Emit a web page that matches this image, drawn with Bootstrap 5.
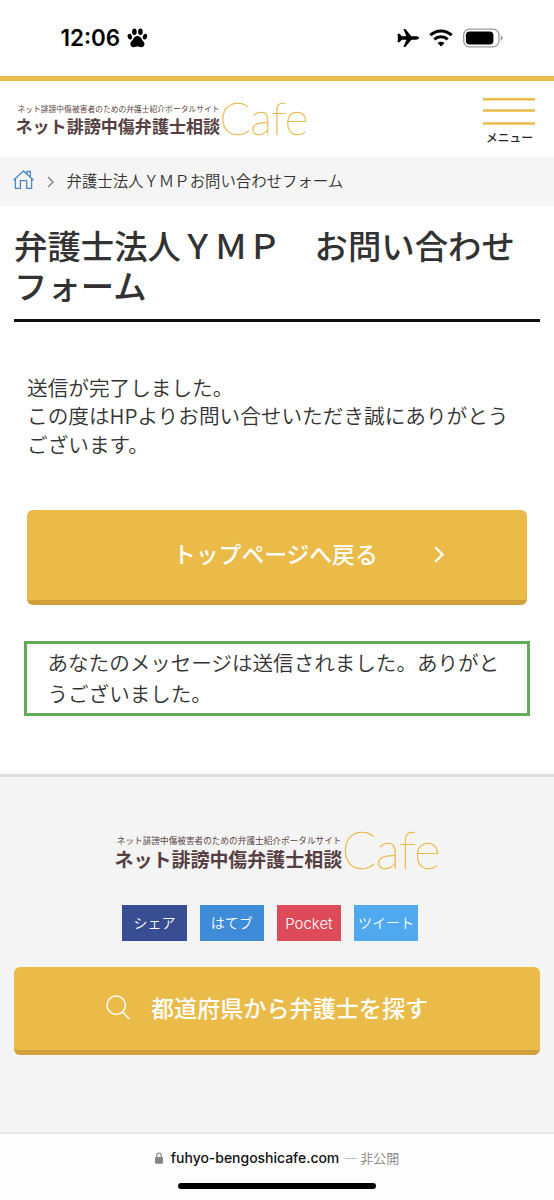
<!DOCTYPE html>
<html lang="ja">
<head>
<meta charset="utf-8">
<meta name="viewport" content="width=device-width, initial-scale=1">
<title>弁護士法人ＹＭＰ　お問い合わせフォーム</title>
<link rel="stylesheet" href="https://cdn.jsdelivr.net/npm/bootstrap@5.3.0/dist/css/bootstrap.min.css">
<style>
  :root { --gold: #eabb49; --gold-dark: #d29f3a; --ink: #323232; }
  body { font-family: "Noto Sans CJK JP", sans-serif; color: var(--ink); background: #fff; height: 1200px; font-weight: 350; overflow: hidden; }
  svg { display: block; flex: none; overflow: visible; }
  .status-bar { height: 76px; padding: 0 51px 0 60.5px; }
  .clock { font: 600 22.4px/26px Inter, sans-serif; color: #000; width: 62px; white-space: nowrap; }
  .site-header { height: 81px; border-top: 5px solid var(--gold); padding: 0 18px 0 15px; }
  .logo-tag { font-size: 7.77px; fill: #5b4545; font-weight: 400; }
  .logo-main { font-size: 17.05px; fill: #553f42; font-weight: 700; }
  .logo-cafe { font: 100 46px Lato, sans-serif; fill: #eabb49; stroke: #eabb49; stroke-width: .45px; }
  .menu-btn { width: 53px; padding: 17px 0 0; font-size: 11.7px; line-height: 17px; font-weight: 500; color: #222; }
  .crumbs { height: 49px; background: #f5f5f5; padding: 0 13px; font-size: 15.4px; line-height: 24px; }
  .page-title { font-size: 33.4px; line-height: 40px; font-weight: 500; margin: 19px 14px 0; height: 97px; border-bottom: 3px solid #111; color: var(--ink); }
  .done-text { margin: 51px 27px 0; font-size: 20.65px; line-height: 28.4px; height: 137px; white-space: nowrap; }
  .cta { background: var(--gold); border: 0; border-bottom: 5px solid var(--gold-dark); border-radius: 6px; color: #fff; font-weight: 500; display: flex; align-items: center; white-space: nowrap; text-decoration: none; }
  .cta-top { margin: 0 27px; height: 95px; font-size: 22.8px; padding: 0 0 1px 146px; }
  .cta-search { margin: 0 14px; height: 88px; font-size: 23.1px; padding: 0 0 2px 92px; }
  .sent { margin: 36px 24px 0; height: 75px; border: 3px solid #61ab5b; padding: 3px 20.5px; font-size: 20.55px; line-height: 30.6px; white-space: nowrap; }
  .site-footer { margin-top: 58px; height: 358px; border-top: 3px solid #dedede; background: #f4f4f4; }
  .shares { gap: 12.9px; margin: 32.5px 0 26px 122.4px; }
  .share { width: 64.3px; height: 36px; font-size: 14px; line-height: 35px; color: #fff; text-align: center; text-decoration: none; white-space: nowrap; }
  .fb { background: #384d92; } .hb { background: #3e8bd8; } .tw { background: #50a8ef; }
  .pk { background: #dd4b5b; font-family: Inter, sans-serif; font-size: 15px; font-weight: 300; line-height: 37px; }
  .browser-bar { height: 68px; background: #fdfdfd; border-top: 2px solid #e8e8e8; }
  .host { font: 500 14px/20px Inter, sans-serif; letter-spacing: -.03px; color: #111; }
  .private { font-size: 13px; line-height: 20px; color: #858585; }
  .home-bar { width: 198px; height: 6px; border-radius: 3px; background: #000; }
</style>
</head>
<body>
<div class="status-bar d-flex align-items-center">
  <div class="clock">12:06</div>
  <svg class="ms-1" width="21" height="20" viewBox="0 0 21 20"><ellipse cx="2.8" cy="8.7" rx="2.1" ry="2.9" transform="rotate(-18 2.8 8.7)"/><ellipse cx="7.4" cy="3.7" rx="2.3" ry="3.2"/><ellipse cx="13.4" cy="3.7" rx="2.3" ry="3.2"/><ellipse cx="18" cy="8.7" rx="2.1" ry="2.9" transform="rotate(18 18 8.7)"/><path d="M10.4 8c2.3 0 3.6 1.7 4.5 3.4.8 1.5 2.6 2.4 2.6 4.6 0 2-1.5 3.2-3.4 3.2-1.4 0-2.4-.6-3.7-.6s-2.3.6-3.7.6c-1.900 0-3.400-1.200-3.400-3.200 0-2.200 1.800-3.100 2.600-4.600C6.800 9.700 8.100 8 10.400 8z"/></svg>
  <div class="d-flex align-items-center ms-auto">
    <svg width="22" height="20" viewBox="0 0 22 20"><path d="M22 10c0 1.100-1.700 1.700-3.300 1.700h-4.200L8.300 19H6.400l3-7.300H4.900L2.400 14.300H.6L.9 10 .6 5.700h1.800l2.500 2.600h4.500L6.400 1h1.900l6.200 7.300h4.200c1.600 0 3.300.6 3.300 1.700z"/></svg>
    <svg style="margin-left:10px" width="24" height="18" viewBox="0 0 24 18"><path d="M1.300 6.200a15.400 15.400 0 0 1 21.400 0M5.300 10.400a9.700 9.700 0 0 1 13.400 0" fill="none" stroke="#000" stroke-width="3"/><path d="M12 17.600l-3.500-3.500a5 5 0 0 1 7 0z"/></svg>
    <svg style="margin-left:10px" width="40" height="18" viewBox="0 0 40 18"><rect x=".7" y=".2" width="35.300" height="17.600" rx="5.800" fill="none" stroke="#999" stroke-width="1.300"/><rect x="2.900" y="2.500" width="27.500" height="13" rx="3.800"/><path d="M37.800 6.200c1.200.6 1.800 1.600 1.800 2.800s-.6 2.200-1.800 2.800z" fill="#999"/></svg>
  </div>
</div>

<header class="site-header d-flex justify-content-between align-items-start">
  <svg width="294" height="40" viewBox="0 0 294 40" style="margin-top:17px">
    <text class="logo-tag" x="2.500" y="14" textLength="202">ネット誹謗中傷被害者のための弁護士紹介ポータルサイト</text>
    <text class="logo-main" x=".5" y="35" textLength="204.600">ネット誹謗中傷弁護士相談</text>
    <text class="logo-cafe" x="204.500" y="36.500" textLength="89">Cafe</text>
  </svg>
  <button class="menu-btn border-0 bg-transparent text-center" type="button">
    <svg width="53" height="30" viewBox="0 0 53 30"><path d="M0 1.300h52M0 12.500h52M0 25.500h52" stroke="#eabb49" stroke-width="2.500"/></svg>メニュー
  </button>
</header>

<nav class="crumbs d-flex align-items-center" aria-label="breadcrumb">
  <svg style="margin-bottom:4px" width="21" height="19" viewBox="0 0 21 19" fill="none" stroke="#4f86c3" stroke-width="1.300"><path d="M.5 10.200L10.500 1l10 9.200M2.400 9v9.300h5V10.600h6.200v7.700h5V9M14 3.500V1.500h3.400v5"/></svg>
  <svg style="margin:0 12.500px 0 13px" width="7" height="12" viewBox="0 0 7 12" fill="none" stroke="#888" stroke-width="1.500"><path d="M1 1l5 5-5 5"/></svg>
  <span class="pb-1">弁護士法人ＹＭＰお問い合わせフォーム</span>
</nav>

<main>
  <h1 class="page-title mb-0">弁護士法人ＹＭＰ　お問い合わせフォーム</h1>
  <p class="done-text mb-0">送信が完了しました。<br>この度はHPよりお問い合せいただき誠にありがとう<br>ございます。</p>
  <a class="cta cta-top" href="#">トップページへ戻る
    <svg style="margin-left:56px" width="11" height="17" viewBox="0 0 11 17" fill="none" stroke="#fff" stroke-width="2.300"><path d="M1.200 1.200l7.300 7.300-7.300 7.300"/></svg>
  </a>
  <div class="sent">あなたのメッセージは送信されました。ありがと<br>うございました。</div>
</main>

<footer class="site-footer">
  <svg width="327" height="44.500" viewBox="0 0 294 40" style="margin:51px 0 0 114px">
    <text class="logo-tag" x="2.500" y="14" textLength="202">ネット誹謗中傷被害者のための弁護士紹介ポータルサイト</text>
    <text class="logo-main" x=".5" y="35.300" textLength="204.600">ネット誹謗中傷弁護士相談</text>
    <text class="logo-cafe" x="204.500" y="36.500" textLength="89">Cafe</text>
  </svg>
  <div class="shares d-flex">
    <a class="share fb" href="#">シェア</a>
    <a class="share hb" href="#">はてブ</a>
    <a class="share pk" href="#">Pocket</a>
    <a class="share tw" href="#">ツイート</a>
  </div>
  <a class="cta cta-search" href="#">
    <svg style="margin-right:21px" width="24" height="25" viewBox="0 0 24 25" fill="none" stroke="#fff" stroke-width="1.500"><circle cx="10.200" cy="10.200" r="9.200"/><path d="M16.500 17l6.800 7"/></svg>都道府県から弁護士を探す
  </a>
</footer>

<div class="browser-bar d-flex flex-column align-items-center">
  <div class="d-flex align-items-center" style="margin-top:14px">
    <svg style="margin-right:8px" width="8" height="12" viewBox="0 0 8 12"><rect y="5" width="8" height="6.800" rx="1" fill="#858585"/><path d="M1.800 5.500V3.200a2.200 2.200 0 0 1 4.400 0v2.300" fill="none" stroke="#858585" stroke-width="1.200"/></svg>
    <span class="host">fuhyo-bengoshicafe.com</span>
    <span class="private" style="margin-left:5px">— 非公開</span>
  </div>
  <div class="home-bar" style="margin-top:15px"></div>
</div>
<script src="https://cdn.jsdelivr.net/npm/bootstrap@5.3.0/dist/js/bootstrap.bundle.min.js"></script>
</body>
</html>
